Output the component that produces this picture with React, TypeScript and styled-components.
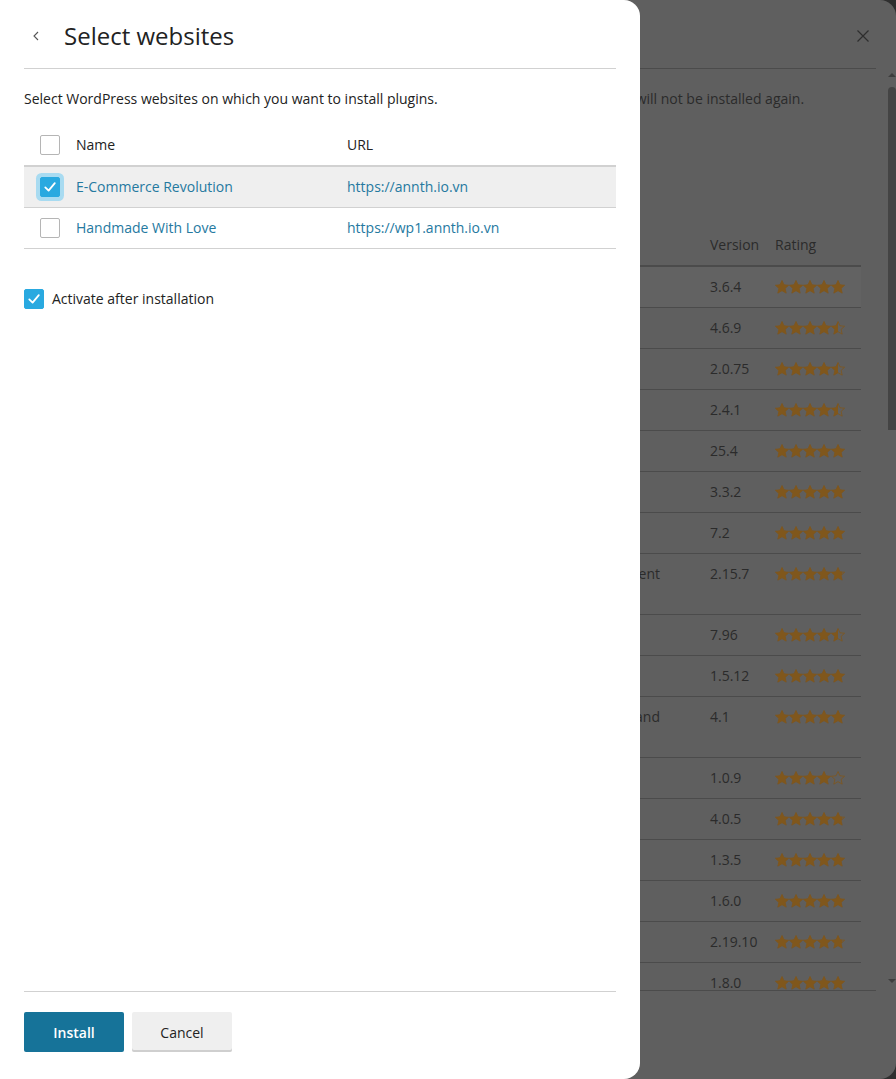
import React, { useId } from "react";
import styled, { createGlobalStyle } from "styled-components";

const GlobalStyle = createGlobalStyle`
  html, body { margin: 0; padding: 0; }
  body {
    font-family: "Open Sans", "Liberation Sans", sans-serif;
    font-size: 14px;
    color: #222;
    overflow: hidden;
    background: #2f2f2f;
  }
  * { box-sizing: border-box; }
`;

const Screen = styled.div`
  position: relative;
  width: 896px;
  height: 1079px;
  overflow: hidden;
  background: #2f2f2f;
`;

/* ---------- dimmed dialog in the background ---------- */

const BackDialog = styled.div`
  width: 896px;
  height: 1079px;
  background: #5f5f5f;
  border-radius: 0 16px 16px 0;
  display: flex;
  flex-direction: column;
  color: #2b2b2b;
`;

const BackHeader = styled.div`
  height: 69px;
  margin: 0 20px 0 24px;
  border-bottom: 1px solid #4b4b4b;
  display: flex;
  align-items: center;
  justify-content: flex-end;
  padding: 3px 7px 0 0;
`;

const CloseIcon = styled.svg`
  width: 12px;
  height: 12px;
  display: block;
`;

const BackBody = styled.div`
  flex: 1;
  display: flex;
  min-height: 0;
`;

const ScrollArea = styled.div`
  flex: 1;
  min-width: 0;
  overflow: hidden;
  margin: 0 12px 0 24px;
  border-bottom: 1px solid #4b4b4b;
`;

const ScrollContent = styled.div`
  padding: 20px 15px 0 0;
`;

const BackText = styled.p`
  margin: 0;
  line-height: 20px;
  white-space: nowrap;
`;

const Toolbar = styled.div`
  height: 116px;
`;

const Grid = styled.div`
  display: grid;
  grid-template-columns: 1fr 65px 94px;
`;

const HeadCell = styled.div`
  padding: 10px 8px;
  line-height: 20px;
  border-bottom: 2px solid #4b4b4b;
`;

const Cell = styled.div<{ $hover?: boolean }>`
  padding: 10px 8px;
  line-height: 20px;
  border-bottom: 1px solid #4b4b4b;
  background: ${(p) => (p.$hover ? "#626262" : "transparent")};
  white-space: nowrap;
`;

const LongName = styled.div`
  width: 628px;
  text-align: justify;
  text-align-last: justify;
  white-space: normal;
`;

const StarRow = styled.div`
  display: flex;
  padding-top: 3px;
`;

const Scrollbar = styled.div`
  width: 8px;
  display: flex;
  flex-direction: column;
  align-items: center;
  padding-top: 4px;
  padding-bottom: 8px;
`;

const Arrow = styled.div<{ $down?: boolean }>`
  width: 0;
  height: 0;
  border-left: 4px solid transparent;
  border-right: 4px solid transparent;
  ${(p) =>
    p.$down
      ? "border-top: 4px solid #3e3e3e; margin-top: auto;"
      : "border-bottom: 4px solid #3e3e3e;"}
`;

const Thumb = styled.div`
  width: 8px;
  height: 343px;
  margin-top: 10px;
  background: #444;
  border-radius: 4px 4px 0 0;
`;

const BackFooter = styled.div`
  height: 88px;
`;

const StarSvg = styled.svg`
  width: 14px;
  height: 14px;
  display: block;
`;

const STAR =
  "M7 0.5 L8.95 4.8 L13.6 5.25 L10.1 8.4 L11.15 13.1 L7 10.65 L2.85 13.1 L3.9 8.4 L0.4 5.25 L5.05 4.8 Z";

function Star({ fill }: { fill: number }) {
  const id = useId();
  return (
    <StarSvg viewBox="0 0 14 14">
      <defs>
        <clipPath id={id}>
          <rect x="0" y="0" width={14 * fill} height="14" />
        </clipPath>
      </defs>
      <path d={STAR} fill="none" stroke="#80571c" strokeWidth="0.8" />
      <path d={STAR} fill="#80571c" clipPath={`url(#${id})`} />
    </StarSvg>
  );
}

function Stars({ value }: { value: number }) {
  return (
    <StarRow>
      {[0, 1, 2, 3, 4].map((i) => (
        <Star key={i} fill={Math.max(0, Math.min(1, value - i))} />
      ))}
    </StarRow>
  );
}

const plugins: { name?: React.ReactNode; version: string; rating: number }[] = [
  { version: "3.6.4", rating: 5 },
  { version: "4.6.9", rating: 4.5 },
  { version: "2.0.75", rating: 4.5 },
  { version: "2.4.1", rating: 4.5 },
  { version: "25.4", rating: 5 },
  { version: "3.3.2", rating: 5 },
  { version: "7.2", rating: 5 },
  {
    name: (
      <LongName>
        All-in-One WP Migration and Backup – Site Export, Import, Restore and Content Management
        <br />
        Toolkit
      </LongName>
    ),
    version: "2.15.7",
    rating: 4.8,
  },
  { version: "7.96", rating: 4.5 },
  { version: "1.5.12", rating: 5 },
  {
    name: (
      <LongName>
        WP Mail SMTP by WPForms – The Most Popular SMTP and Email Log Plugin Fast and
        <br />
        Reliable
      </LongName>
    ),
    version: "4.1",
    rating: 5,
  },
  { version: "1.0.9", rating: 4 },
  { version: "4.0.5", rating: 4.8 },
  { version: "1.3.5", rating: 5 },
  { version: "1.6.0", rating: 5 },
  { version: "2.19.10", rating: 4.8 },
  { version: "1.8.0", rating: 5 },
];

function Backdrop() {
  return (
    <BackDialog aria-hidden="true">
      <BackHeader>
        <CloseIcon viewBox="0 0 12 12">
          <path d="M0.5 0.5 L11.5 11.5 M11.5 0.5 L0.5 11.5" stroke="#2e2e2e" strokeWidth="1.2" />
        </CloseIcon>
      </BackHeader>
      <BackBody>
        <ScrollArea>
          <ScrollContent>
            <BackText>
              Select plugins to install on your websites. Plugins that are already installed on all
              the websites will not be installed again.
            </BackText>
            <Toolbar />
            <Grid>
              <HeadCell />
              <HeadCell>Version</HeadCell>
              <HeadCell>Rating</HeadCell>
              {plugins.map((p, i) => (
                <React.Fragment key={i}>
                  <Cell $hover={i === 0}>{p.name}</Cell>
                  <Cell $hover={i === 0}>{p.version}</Cell>
                  <Cell $hover={i === 0}>
                    <Stars value={p.rating} />
                  </Cell>
                </React.Fragment>
              ))}
            </Grid>
          </ScrollContent>
        </ScrollArea>
        <Scrollbar>
          <Arrow />
          <Thumb />
          <Arrow $down />
        </Scrollbar>
      </BackBody>
      <BackFooter />
    </BackDialog>
  );
}

/* ---------- front side panel ---------- */

const Panel = styled.aside`
  position: absolute;
  left: 0;
  top: 0;
  width: 640px;
  height: 1079px;
  background: #fff;
  border-radius: 0 16px 16px 0;
  display: flex;
  flex-direction: column;
  padding: 0 24px;
`;

const Header = styled.header`
  height: 69px;
  border-bottom: 1px solid #d1d1d1;
  display: flex;
  align-items: center;
  gap: 25px;
  padding: 4px 0 0 9px;
`;

const BackButton = styled.button`
  border: 0;
  background: none;
  padding: 0;
  width: 6px;
  height: 10px;
  display: flex;
  cursor: pointer;
`;

const Title = styled.h1`
  margin: 0;
  font-size: 24px;
  font-weight: 400;
  line-height: 32px;
  color: #222;
`;

const Body = styled.main`
  flex: 1;
  min-height: 0;
`;

const Intro = styled.p`
  margin: 20px 0 15px;
  line-height: 20px;
  color: #222;
`;

const Table = styled.div`
  display: grid;
  grid-template-columns: 44px 271px 1fr;
`;

const Th = styled.div`
  height: 43px;
  border-bottom: 2px solid #d1d1d1;
  display: flex;
  align-items: center;
  padding: 0 8px;
  line-height: 20px;
  color: #222;
`;

const Td = styled.div<{ $selected?: boolean }>`
  height: 41px;
  border-bottom: 1px solid #d1d1d1;
  background: ${(p) => (p.$selected ? "#efefef" : "#fff")};
  display: flex;
  align-items: center;
  padding: 0 8px;
  line-height: 20px;
`;

const CheckCell = styled.div`
  display: flex;
  align-items: center;
  padding-left: 8px;
`;

const Link = styled.a`
  color: #25799f;
  text-decoration: none;
  cursor: pointer;
`;

const Box = styled.span<{ $checked?: boolean; $focus?: boolean }>`
  width: 20px;
  height: 20px;
  flex: none;
  border-radius: 2px;
  display: inline-flex;
  align-items: center;
  justify-content: center;
  background: ${(p) => (p.$checked ? "#29a9e0" : "#fff")};
  border: 1px solid ${(p) => (p.$checked ? "#29a9e0" : "#b5b5b5")};
  box-shadow: ${(p) => (p.$focus ? "0 0 0 4px #a8dbf1" : "none")};
`;

const CheckSvg = styled.svg`
  width: 14px;
  height: 14px;
  display: block;
`;

function Checkbox({ checked, focus }: { checked?: boolean; focus?: boolean }) {
  return (
    <Box $checked={checked} $focus={focus}>
      {checked && (
        <CheckSvg viewBox="0 0 14 14">
          <path
            d="M2.3 7.4 L5.6 10.6 L11.8 3.2"
            fill="none"
            stroke="#fff"
            strokeWidth="1.8"
            strokeLinecap="round"
            strokeLinejoin="round"
          />
        </CheckSvg>
      )}
    </Box>
  );
}

const Option = styled.label`
  display: flex;
  align-items: center;
  gap: 8px;
  margin-top: 40px;
  line-height: 20px;
  color: #222;
`;

const Footer = styled.footer`
  border-top: 1px solid #d1d1d1;
  padding: 20px 0 27px;
  display: flex;
  gap: 8px;
`;

const Button = styled.button<{ $primary?: boolean }>`
  width: 100px;
  height: 40px;
  border: 0;
  border-radius: 2px;
  font-family: inherit;
  font-size: 14px;
  font-weight: ${(p) => (p.$primary ? 600 : 400)};
  color: ${(p) => (p.$primary ? "#fff" : "#222")};
  background: ${(p) => (p.$primary ? "#167399" : "#efefef")};
  box-shadow: ${(p) => (p.$primary ? "none" : "inset 0 -2px 0 #cfcfcf")};
  cursor: pointer;
`;

const sites = [
  { name: "E-Commerce Revolution", url: "https://annth.io.vn", selected: true },
  { name: "Handmade With Love", url: "https://wp1.annth.io.vn", selected: false },
];

export default function App() {
  return (
    <>
      <GlobalStyle />
      <Screen>
        <Backdrop />
        <Panel>
          <Header>
            <BackButton aria-label="Back">
              <svg width="6" height="10" viewBox="0 0 6 10">
                <path d="M5 1 L1 5 L5 9" fill="none" stroke="#555" strokeWidth="1.1" />
              </svg>
            </BackButton>
            <Title>Select websites</Title>
          </Header>
          <Body>
            <Intro>Select WordPress websites on which you want to install plugins.</Intro>
            <Table>
              <Th>
                <CheckCell>
                  <Checkbox />
                </CheckCell>
              </Th>
              <Th>Name</Th>
              <Th>URL</Th>
              {sites.map((s) => (
                <React.Fragment key={s.name}>
                  <Td $selected={s.selected}>
                    <CheckCell>
                      <Checkbox checked={s.selected} focus={s.selected} />
                    </CheckCell>
                  </Td>
                  <Td $selected={s.selected}>
                    <Link>{s.name}</Link>
                  </Td>
                  <Td $selected={s.selected}>
                    <Link>{s.url}</Link>
                  </Td>
                </React.Fragment>
              ))}
            </Table>
            <Option>
              <Checkbox checked />
              Activate after installation
            </Option>
          </Body>
          <Footer>
            <Button $primary>Install</Button>
            <Button>Cancel</Button>
          </Footer>
        </Panel>
      </Screen>
    </>
  );
}
